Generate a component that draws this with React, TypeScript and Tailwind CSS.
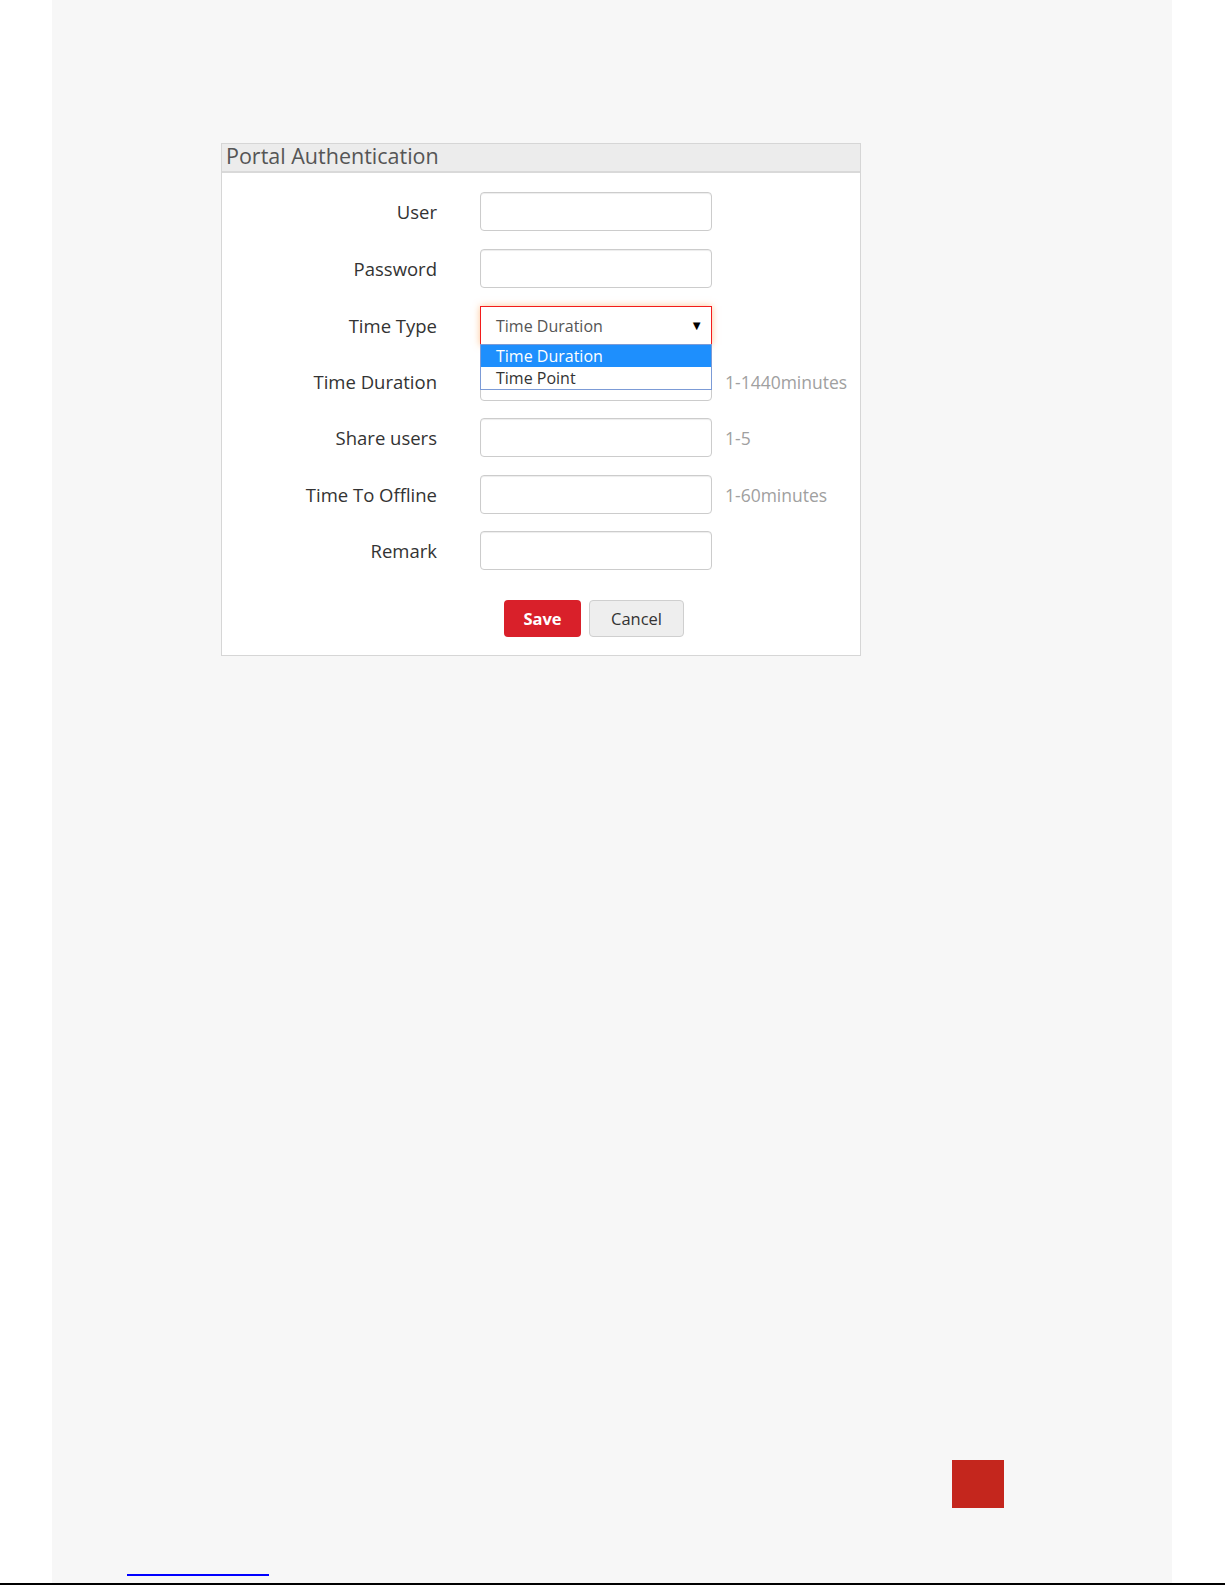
const fields = [
  { label: "User", hint: "", gap: "mt-0" },
  { label: "Password", hint: "", gap: "mt-[18px]" },
  { label: "Time Type", hint: "", gap: "mt-[18px]", select: true },
  { label: "Time Duration", hint: "1-1440minutes", gap: "mt-[17px]" },
  { label: "Share users", hint: "1-5", gap: "mt-[17px]" },
  { label: "Time To Offline", hint: "1-60minutes", gap: "mt-[18px]" },
  { label: "Remark", hint: "", gap: "mt-[17px]" },
];

function TimeTypeSelect() {
  return (
    <div className="relative h-[39px] w-[232px]">
      <div className="flex h-full w-full items-center justify-between border border-[#f21c1c] bg-white pl-[15px] pr-[8px] text-[16px] text-[#555] shadow-[0_0_7px_rgba(255,150,60,0.55)]">
        <span>Time Duration</span>
        <span className="text-[13px] leading-none text-black">▼</span>
      </div>
      {/* Open option list */}
      <ul className="absolute left-0 top-[38px] z-10 w-[232px] border border-[#7c9bd6] bg-white text-[16px] leading-[22px]">
        <li className="bg-[#1e8ffd] pl-[15px] text-white">Time Duration</li>
        <li className="pl-[15px] text-[#333]">Time Point</li>
      </ul>
    </div>
  );
}

export default function App() {
  return (
    <div className="min-h-[1585px] bg-white font-['Open_Sans',sans-serif]">
      <div className="flex">
        <div className="ml-[52px] flex h-[1583px] w-[1120px] flex-col bg-[#f7f7f7]">
          {/* Form card */}
          <div className="ml-[169px] mt-[143px] w-[640px] border border-[#d6d6d6] bg-white">
            <div className="h-[29px] border-b-2 border-[#d9d9d9] bg-[#ececec] pl-[4px] text-[21.5px] leading-[24px] text-[#555]">
              Portal Authentication
            </div>

            <div className="pt-[19px]">
              {fields.map((f) => (
                <div key={f.label} className={`flex h-[39px] items-center ${f.gap}`}>
                  <label className="w-[215px] text-right text-[18.5px] text-[#333]">
                    {f.label}
                  </label>
                  <div className="ml-[43px]">
                    {f.select ? (
                      <TimeTypeSelect />
                    ) : (
                      <input
                        type="text"
                        className="h-[39px] w-[232px] rounded-[4px] border border-[#cccccc] bg-white shadow-[inset_0_1px_1px_rgba(0,0,0,0.075)] outline-none"
                      />
                    )}
                  </div>
                  {f.hint && (
                    <span className="ml-[13px] pt-[2px] text-[17.5px] text-[#a0a0a0]">{f.hint}</span>
                  )}
                </div>
              ))}
            </div>

            <div className="mt-[30px] flex gap-[8px] pb-[18px] pl-[282px]">
              <button className="h-[37px] w-[77px] rounded-[4px] bg-[#d9202a] pt-[2px] text-[16.5px] font-bold text-white">
                Save
              </button>
              <button className="h-[37px] w-[95px] rounded-[4px] border border-[#cfcfcf] bg-[#eeeeee] pt-[2px] text-[16.5px] text-[#333]">
                Cancel
              </button>
            </div>
          </div>

          {/* Page footer marks */}
          <div className="mt-auto">
            <div className="ml-[900px] h-[48px] w-[52px] bg-[#c4261d]" />
            <div className="ml-[75px] mt-[66px] mb-[7px] h-[2px] w-[142px] bg-[#0000ff]" />
          </div>
        </div>
      </div>
      <div className="h-[2px] w-full bg-black" />
    </div>
  );
}
